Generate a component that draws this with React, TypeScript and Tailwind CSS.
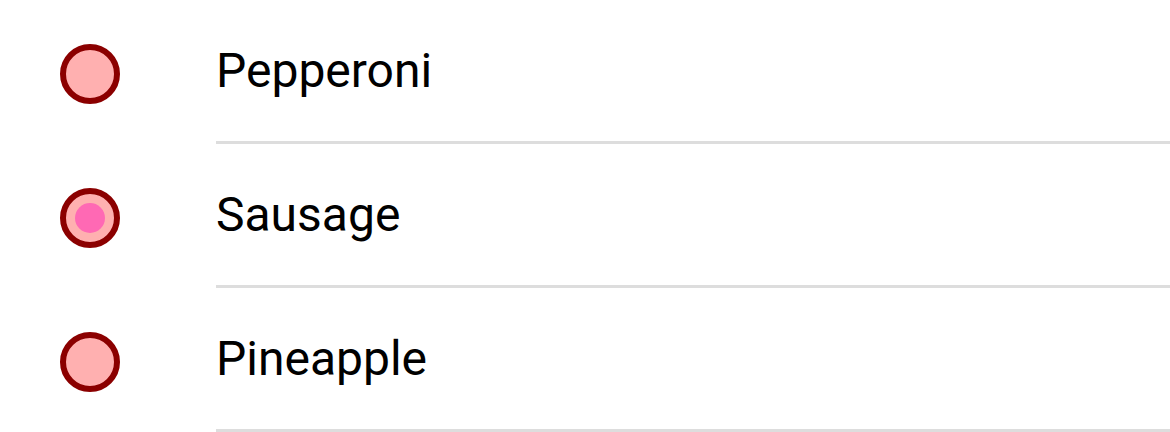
import React from "react";

const items = [
  { label: "Pepperoni", selected: false },
  { label: "Sausage", selected: true },
  { label: "Pineapple", selected: false },
];

export default function App() {
  return (
    <div className="w-[1170px] h-[432px] bg-white" style={{ fontFamily: "Roboto, 'Liberation Sans', sans-serif" }}>
      {items.map((it) => (
        <div key={it.label} className="flex h-[144px]">
          <div className="w-[216px] flex items-center pl-[60px]">
            <div className="mt-[4px] w-[60px] h-[60px] rounded-full border-[6px] border-[#8b0000] bg-[#ffb0b0] flex items-center justify-center">
              {it.selected && <div className="w-[30px] h-[30px] rounded-full bg-[#ff69b4]" />}
            </div>
          </div>
          <div className="flex-1 flex items-center border-b-[3px] border-[#dddddd] text-[48px] text-black">
            {it.label}
          </div>
        </div>
      ))}
    </div>
  );
}
